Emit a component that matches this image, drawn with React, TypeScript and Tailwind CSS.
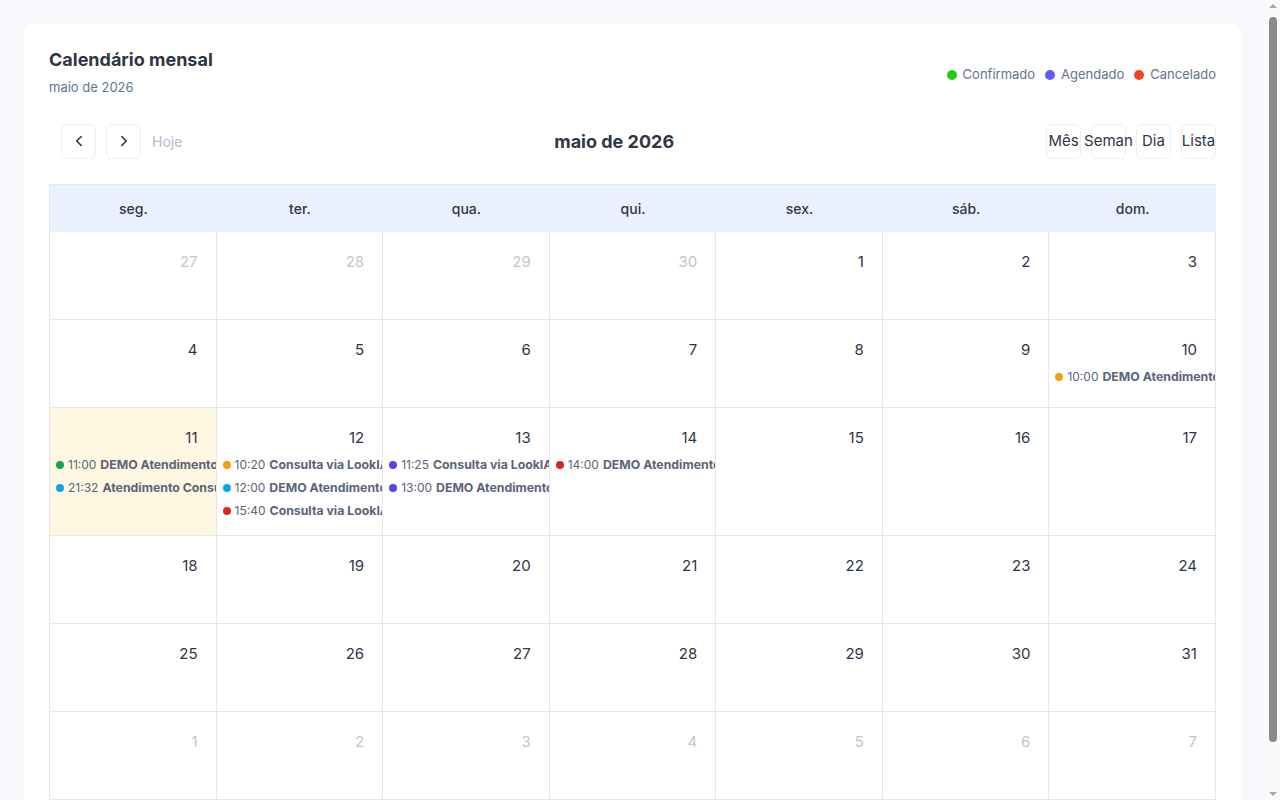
import { ChevronLeft, ChevronRight } from 'lucide-react'

type Ev = { time: string; title: string; color: string }

const events: Record<string, Ev[]> = {
  '2026-05-10': [{ time: '10:00', title: 'DEMO Atendimento Consulta', color: 'bg-[#f59e0b]' }],
  '2026-05-11': [
    { time: '11:00', title: 'DEMO Atendimento Presencial', color: 'bg-[#16a34a]' },
    { time: '21:32', title: 'Atendimento Consulta', color: 'bg-[#0ea5e9]' },
  ],
  '2026-05-12': [
    { time: '10:20', title: 'Consulta via LookIA', color: 'bg-[#f59e0b]' },
    { time: '12:00', title: 'DEMO Atendimento Consulta', color: 'bg-[#0ea5e9]' },
    { time: '15:40', title: 'Consulta via LookIA', color: 'bg-[#dc2626]' },
  ],
  '2026-05-13': [
    { time: '11:25', title: 'Consulta via LookIA', color: 'bg-[#4f46e5]' },
    { time: '13:00', title: 'DEMO Atendimento Consulta', color: 'bg-[#4f46e5]' },
  ],
  '2026-05-14': [{ time: '14:00', title: 'DEMO Atendimento Consulta', color: 'bg-[#dc2626]' }],
}

const weekdays = ['seg.', 'ter.', 'qua.', 'qui.', 'sex.', 'sáb.', 'dom.']

function buildWeeks() {
  const days: { day: number; key: string; outside: boolean }[] = []
  ;[27, 28, 29, 30].forEach((d) => days.push({ day: d, key: `2026-04-${d}`, outside: true }))
  for (let d = 1; d <= 31; d++) {
    days.push({ day: d, key: `2026-05-${String(d).padStart(2, '0')}`, outside: false })
  }
  for (let d = 1; days.length < 42; d++) days.push({ day: d, key: `2026-06-0${d}`, outside: true })
  const weeks = []
  for (let i = 0; i < days.length; i += 7) weeks.push(days.slice(i, i + 7))
  return weeks
}

// browser scrollbar as seen in the screenshot
function FakeScrollbar() {
  return (
    <div className="flex h-[800px] w-[15px] shrink-0 flex-col items-center bg-[#fafafa]">
      <div className="mt-[4px] h-0 w-0 border-x-[4px] border-b-[4px] border-x-transparent border-b-[#a3a3a3]" />
      <div className="mt-[9px] h-[725px] w-[8px] rounded-full bg-[#8a8a8a]" />
      <div className="flex-1" />
      <div className="mb-[4px] h-0 w-0 border-x-[4px] border-t-[4px] border-x-transparent border-t-[#a3a3a3]" />
    </div>
  )
}

export default function App() {
  const weeks = buildWeeks()
  const today = '2026-05-11'

  return (
    <div className="flex h-[800px] overflow-hidden bg-[#f7f8fc] font-['Inter',sans-serif] text-[#374151]">
      <div className="min-w-0 flex-1 p-6">
        <div className="rounded-lg bg-white px-[25px] pt-6 pb-6">
          <div className="flex items-start justify-between">
            <div>
              <h1 className="text-[18px] font-bold text-[#2f3645] leading-[24px]">Calendário mensal</h1>
              <p className="mt-[6px] text-[13px] text-[#64748b]">maio de 2026</p>
            </div>
            <div className="mt-[17px] flex items-center gap-[10px] text-[13px] text-[#64748b]">
              <span className="flex items-center gap-[6px]"><span className="h-[10px] w-[10px] rounded-full bg-[#22cc11]" />Confirmado</span>
              <span className="flex items-center gap-[6px]"><span className="h-[10px] w-[10px] rounded-full bg-[#5b5bf6]" />Agendado</span>
              <span className="flex items-center gap-[6px]"><span className="h-[10px] w-[10px] rounded-full bg-[#f5431f]" />Cancelado</span>
            </div>
          </div>

          <div className="mt-[26px] flex items-center justify-between">
            <div className="flex items-center gap-[10px] pl-3">
              <button className="flex h-[35px] w-[35px] items-center justify-center rounded-md border border-[#eceef2] text-[#1f2d4a]">
                <ChevronLeft size={18} strokeWidth={2} />
              </button>
              <button className="flex h-[35px] w-[35px] items-center justify-center rounded-md border border-[#eceef2] text-[#1f2d4a]">
                <ChevronRight size={18} strokeWidth={2} />
              </button>
              <span className="ml-[1px] text-[14px] text-[#b2bccc]">Hoje</span>
            </div>
            <div className="text-[18px] font-bold text-[#2f3645]">maio de 2026</div>
            <div className="flex justify-end gap-[10px]">
              {['Mês', 'Seman', 'Dia', 'Lista'].map((v) => (
                <button
                  key={v}
                  className="flex h-[35px] w-[35px] items-center justify-center overflow-visible whitespace-nowrap rounded-md border border-[#eceef2] text-[15px] text-[#2f3645]"
                >
                  {v}
                </button>
              ))}
            </div>
          </div>

          <div className="mt-[25px] border-l border-t border-[#e5e7eb]">
            <div className="grid grid-cols-7 bg-[#ebf0fe]">
              {weekdays.map((w) => (
                <div key={w} className="flex h-[47px] items-center justify-center text-[14px] font-medium text-[#2f3645]">
                  {w}
                </div>
              ))}
            </div>
            {weeks.map((week, i) => (
              <div key={i} className="grid grid-cols-7">
                {week.map((d) => {
                  const evs = events[d.key] || []
                  return (
                    <div
                      key={d.key}
                      className={`min-w-0 overflow-hidden border-b border-r border-[#e5e7eb] ${
                        i === 2 ? 'h-[128px]' : 'h-[88px]'
                      } ${d.key === today ? 'bg-[#fef8e2]' : 'bg-white'}`}
                    >
                      <div
                        className={`pr-[18px] pt-[20px] text-right text-[15px] leading-[20px] ${
                          d.outside ? 'text-[#c2c6cd]' : 'text-[#2f3645]'
                        }`}
                      >
                        {d.day}
                      </div>
                      <div className="mt-[8px] flex flex-col gap-[5px] pl-[6px]">
                        {evs.map((e, j) => (
                          <div key={j} className="flex items-center gap-[4px] whitespace-nowrap text-[12px] leading-[18px] text-[#5b6478]">
                            <span className={`h-[8px] w-[8px] shrink-0 rounded-full ${e.color}`} />
                            <span>{e.time}</span>
                            <span className="text-[12.3px] font-bold">{e.title}</span>
                          </div>
                        ))}
                      </div>
                    </div>
                  )
                })}
              </div>
            ))}
          </div>
        </div>
      </div>
      <FakeScrollbar />
    </div>
  )
}
